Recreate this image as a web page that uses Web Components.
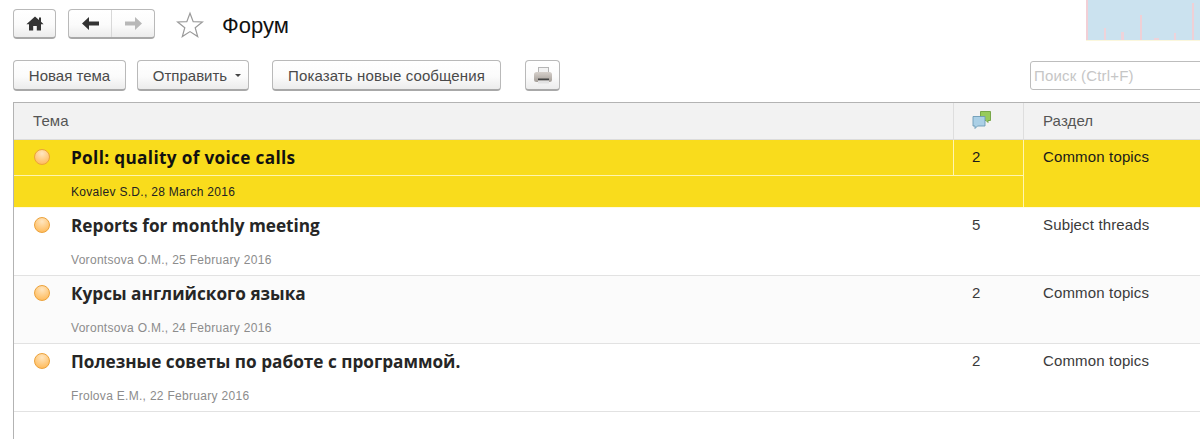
<!DOCTYPE html>
<html lang="ru">
<head>
<meta charset="utf-8">
<title>Форум</title>
<style>
  html, body { margin: 0; height: 100%; background: #fff; overflow: hidden; }
  body { font-family: "Liberation Sans", Arial, sans-serif; color: #333; }
</style>
</head>
<body>
<forum-page>
  <forum-header title-text="Форум"></forum-header>
  <forum-toolbar></forum-toolbar>
  <forum-table>
    <forum-row slot="rows" selected topic="Poll: quality of voice calls" meta="Kovalev S.D., 28 March 2016" count="2" section="Common topics"></forum-row>
    <forum-row slot="rows" topic="Reports for monthly meeting" meta="Vorontsova O.M., 25 February 2016" count="5" section="Subject threads"></forum-row>
    <forum-row slot="rows" alt topic="Курсы английского языка" meta="Vorontsova O.M., 24 February 2016" count="2" section="Common topics"></forum-row>
    <forum-row slot="rows" topic="Полезные советы по работе с программой." meta="Frolova E.M., 22 February 2016" count="2" section="Common topics"></forum-row>
  </forum-table>
</forum-page>

<script>
// shared look of the grey toolbar buttons
const buttonCss = `
  display: flex;
  align-items: center;
  justify-content: center;
  box-sizing: border-box;
  border: 1px solid #b9b9b9;
  border-bottom: 2px solid #a8a8a8;
  border-radius: 4px;
  background: linear-gradient(#ffffff 0%, #fbfbfb 55%, #ececec 100%);
`;

class ForumButton extends HTMLElement {
  constructor() {
    super();
    this.attachShadow({ mode: 'open' }).innerHTML = `
      <style>
        :host {
          ${buttonCss}
          height: 31px;
          font-size: 15px;
          letter-spacing: 0.12px;
          color: #4a4a4a;
          white-space: nowrap;
        }
      </style>
      <slot></slot>
    `;
  }
}

class ForumHeader extends HTMLElement {
  constructor() {
    super();
    this.attachShadow({ mode: 'open' }).innerHTML = `
      <style>
        :host {
          display: flex;
          align-items: flex-start;
          height: 60px;
          padding: 9px 0 0 13px;
          box-sizing: border-box;
        }
        .nav { ${buttonCss} height: 30px; }
        .home { width: 43px; margin-right: 12px; }
        .history { width: 87px; margin-right: 21px; }
        .history span { flex: 1; height: 100%; display: flex; align-items: center; justify-content: center; }
        .history span + span { border-left: 1px solid #d8d8d8; }
        .star { width: 28px; height: 28px; margin: 2px 18px 0 0; }
        h1 { margin: 3px 0 0; font-size: 22px; font-weight: 400; color: #111; line-height: 28px; }
        .logo {
          margin-left: auto;
          margin-top: -9px;
          width: 114px;
          height: 41px;
          box-sizing: border-box;
          border-bottom: 1px solid #fbf7dc;
          background:
            linear-gradient(#f2cfd6, #f2cfd6) 0 0 / 2px 100% no-repeat,
            linear-gradient(#eed3da, #eed3da) 18px 28px / 2px 12px no-repeat,
            linear-gradient(#eed3da, #eed3da) 35px 32px / 3px 8px no-repeat,
            linear-gradient(#efd0d6, #efd0d6) 54px 15px / 2px 25px no-repeat,
            linear-gradient(#eed3da, #eed3da) 68px 38px / 5px 2px no-repeat,
            linear-gradient(#eed3da, #eed3da) 88px 33px / 2px 7px no-repeat,
            linear-gradient(#efd0d6, #efd0d6) 106px 3px / 2px 37px no-repeat,
            #cbe2ef;
        }
      </style>
      <div class="nav home">
        <svg width="18" height="15" viewBox="0 0 18 15"><path d="M9 .5 13 4V1.5h2V5.8L17.6 8.2H15V14.5H10.8V10H7.2V14.5H3V8.2H.4z" fill="#333"/></svg>
      </div>
      <div class="nav history">
        <span><svg width="17" height="13" viewBox="0 0 17 13"><path d="M7 0 0 6.5 7 13V8.6H17V4.4H7z" fill="#333"/></svg></span>
        <span><svg width="17" height="13" viewBox="0 0 17 13"><path d="M10 0l7 6.5-7 6.5V8.6H0V4.4h10z" fill="#b8b8b8"/></svg></span>
      </div>
      <svg class="star" viewBox="0 0 28 28"><path d="M14 2.2 17.2 10.6 26.4 11 19.2 16.7 21.7 25.6 14 20.6 6.3 25.6 8.8 16.7 1.6 11 10.8 10.6z" fill="#fff" stroke="#9a9a9a" stroke-width="1.2"/></svg>
      <h1></h1>
      <div class="logo"></div>
    `;
  }

  connectedCallback() {
    this.shadowRoot.querySelector('h1').textContent = this.getAttribute('title-text');
  }
}

class ForumToolbar extends HTMLElement {
  constructor() {
    super();
    this.attachShadow({ mode: 'open' }).innerHTML = `
      <style>
        :host {
          display: flex;
          align-items: flex-start;
          height: 42px;
          padding-left: 13px;
        }
        .caret { width: 0; height: 0; margin-left: 8px; border: 3px solid transparent; border-top-color: #444; border-bottom: 0; }
        .search {
          margin-left: auto;
          margin-top: 1px;
          width: 175px;
          height: 29px;
          box-sizing: border-box;
          margin-right: -5px;
          padding-left: 3px;
          border: 1px solid #bdbdbd;
          border-radius: 3px;
          font-size: 15px;
          letter-spacing: 0.2px;
          line-height: 27px;
          color: #c6c6c6;
          background: #fff;
        }
      </style>
      <forum-button style="width:113px;margin-right:11px;letter-spacing:0">Новая тема</forum-button>
      <forum-button style="width:112px;margin-right:23px;padding-left:8px;letter-spacing:0">Отправить<span class="caret"></span></forum-button>
      <forum-button style="width:229px;margin-right:24px">Показать новые сообщения</forum-button>
      <forum-button style="width:35px">
        <svg width="20" height="18" viewBox="0 0 20 18">
          <defs><linearGradient id="pb" x1="0" y1="0" x2="0" y2="1"><stop offset="0" stop-color="#d6d0cb"/><stop offset="1" stop-color="#a49e98"/></linearGradient></defs>
          <rect x="5.5" y="1.5" width="10" height="6" fill="#f2f2f2" stroke="#b5b5b5"/>
          <rect x="1" y="6" width="18" height="10" rx="2.5" fill="url(#pb)"/>
          <rect x="5" y="12.5" width="11" height="2" fill="#444"/>
          <rect x="5" y="14.5" width="11" height="3" fill="#e2e2e2"/>
        </svg>
      </forum-button>
      <div class="search">Поиск (Ctrl+F)</div>
    `;
  }
}

class ForumTable extends HTMLElement {
  constructor() {
    super();
    this.attachShadow({ mode: 'open' }).innerHTML = `
      <style>
        :host {
          display: block;
          margin-left: 13px;
          height: 337px;
          box-sizing: border-box;
          border-top: 1px solid #b3b3b3;
          border-left: 1px solid #b3b3b3;
        }
        .head {
          display: grid;
          grid-template-columns: 940px 69px 1fr;
          height: 36px;
          background: #f2f2f2;
          border-bottom: 1px solid #dcdcdc;
          font-size: 15px;
          letter-spacing: 0.1px;
          color: #555;
        }
        .head div { display: flex; align-items: center; box-sizing: border-box; padding: 0 0 2px 19px; }
        .head div:nth-child(1) { border-right: 1px solid #dedede; }
        .head div:nth-child(2) { padding-left: 18px; }
        .head div:nth-child(3) { border-left: 1px solid #dedede; }
      </style>
      <div class="head">
        <div>Тема</div>
        <div>
          <svg width="20" height="18" viewBox="0 0 20 18">
            <path d="M8.5 .5H18.5V9.5H16V11.5L14 9.5H8.5z" fill="#97cb5c" stroke="#6fa03e" stroke-width=".9"/>
            <path d="M1 5.5H13V15H5.5L3 17.5V15H1z" fill="#abd0e6" stroke="#6d9bb5" stroke-width=".9"/>
          </svg>
        </div>
        <div>Раздел</div>
      </div>
      <slot name="rows"></slot>
    `;
  }
}

class ForumRow extends HTMLElement {
  constructor() {
    super();
    this.attachShadow({ mode: 'open' }).innerHTML = `
      <style>
        :host {
          display: grid;
          grid-template-columns: 940px 69px 1fr;
          grid-template-rows: 35px 32px;
          height: 68px;
          box-sizing: border-box;
          border-bottom: 1px solid #e2e2e2;
          font-size: 15px;
          letter-spacing: 0.15px;
          color: #3a3a3a;
        }
        :host([alt]) { background: #fbfbfb; }
        :host([selected]) {
          background: #f9dc1c;
          color: #1a1a1a;
          border-bottom-color: #fffbe0;
          --line: #fff5b0;
          --meta: #222;
        }
        .topic {
          display: flex;
          align-items: flex-start;
          box-sizing: border-box;
          border-right: 1px solid var(--line, transparent);
        }
        .dot {
          width: 14px;
          height: 14px;
          margin: 9px 0 0 20px;
          border: 1px solid #eca23a;
          border-radius: 50%;
          background: radial-gradient(circle at 50% 25%, #ffe6c0, #ffbe62 80%);
        }
        .topic b {
          margin: 7px 0 0 21px;
          font-family: "Open Sans", "Liberation Sans", sans-serif;
          font-size: 17.2px;
          line-height: 21px;
          letter-spacing: 0;
          color: #262626;
        }
        :host([selected]) .topic b { color: #111; letter-spacing: 0.33px; }
        .count { padding: 8px 0 0 18px; line-height: 18px; box-sizing: border-box; }
        .section {
          grid-column: 3;
          grid-row: 1 / 3;
          padding: 8px 0 0 19px;
          line-height: 18px;
          box-sizing: border-box;
          border-left: 1px solid var(--line, transparent);
        }
        .meta {
          grid-column: 1 / 3;
          grid-row: 2;
          padding: 8px 0 0 57px;
          font-size: 12px;
          letter-spacing: 0.3px;
          line-height: 17px;
          color: var(--meta, #8c8c8c);
          border-top: 1px solid var(--line, transparent);
          box-sizing: border-box;
        }
      </style>
      <div class="topic"><span class="dot"></span><b></b></div>
      <div class="count"></div>
      <div class="section"></div>
      <div class="meta"></div>
    `;
  }

  connectedCallback() {
    const root = this.shadowRoot;
    root.querySelector('b').textContent = this.getAttribute('topic');
    root.querySelector('.count').textContent = this.getAttribute('count');
    root.querySelector('.section').textContent = this.getAttribute('section');
    root.querySelector('.meta').textContent = this.getAttribute('meta');
  }
}

class ForumPage extends HTMLElement {
  constructor() {
    super();
    this.attachShadow({ mode: 'open' }).innerHTML = `
      <style>:host { display: block; height: 439px; overflow: hidden; }</style>
      <slot></slot>
    `;
  }
}

customElements.define('forum-button', ForumButton);
customElements.define('forum-header', ForumHeader);
customElements.define('forum-toolbar', ForumToolbar);
customElements.define('forum-table', ForumTable);
customElements.define('forum-row', ForumRow);
customElements.define('forum-page', ForumPage);
</script>
</body>
</html>
